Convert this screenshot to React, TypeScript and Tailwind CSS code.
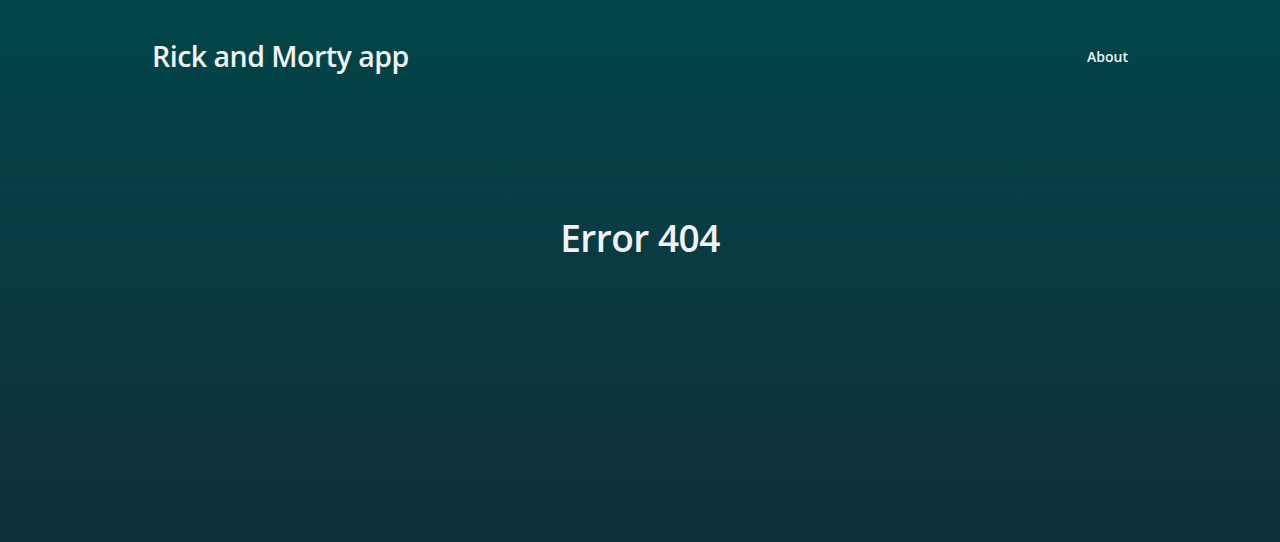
import React from "react";

export default function App() {
  return (
    <div
      className="min-h-[542px] w-full bg-gradient-to-b from-[#004649] to-[#0f2e3b] text-[#f2f2f2]"
      style={{ fontFamily: '"Open Sans", "Noto Sans", sans-serif' }}
    >
      <header className="mx-auto flex h-[112px] w-[976px] items-center justify-between">
        <h1 className="text-[28.5px] font-semibold tracking-[-0.5px]">Rick and Morty app</h1>
        <a className="text-[14px] font-semibold">About</a>
      </header>
      <main className="flex justify-center pt-[98px]">
        <h2 className="text-[37px] font-semibold tracking-[-0.5px]">Error 404</h2>
      </main>
    </div>
  );
}
